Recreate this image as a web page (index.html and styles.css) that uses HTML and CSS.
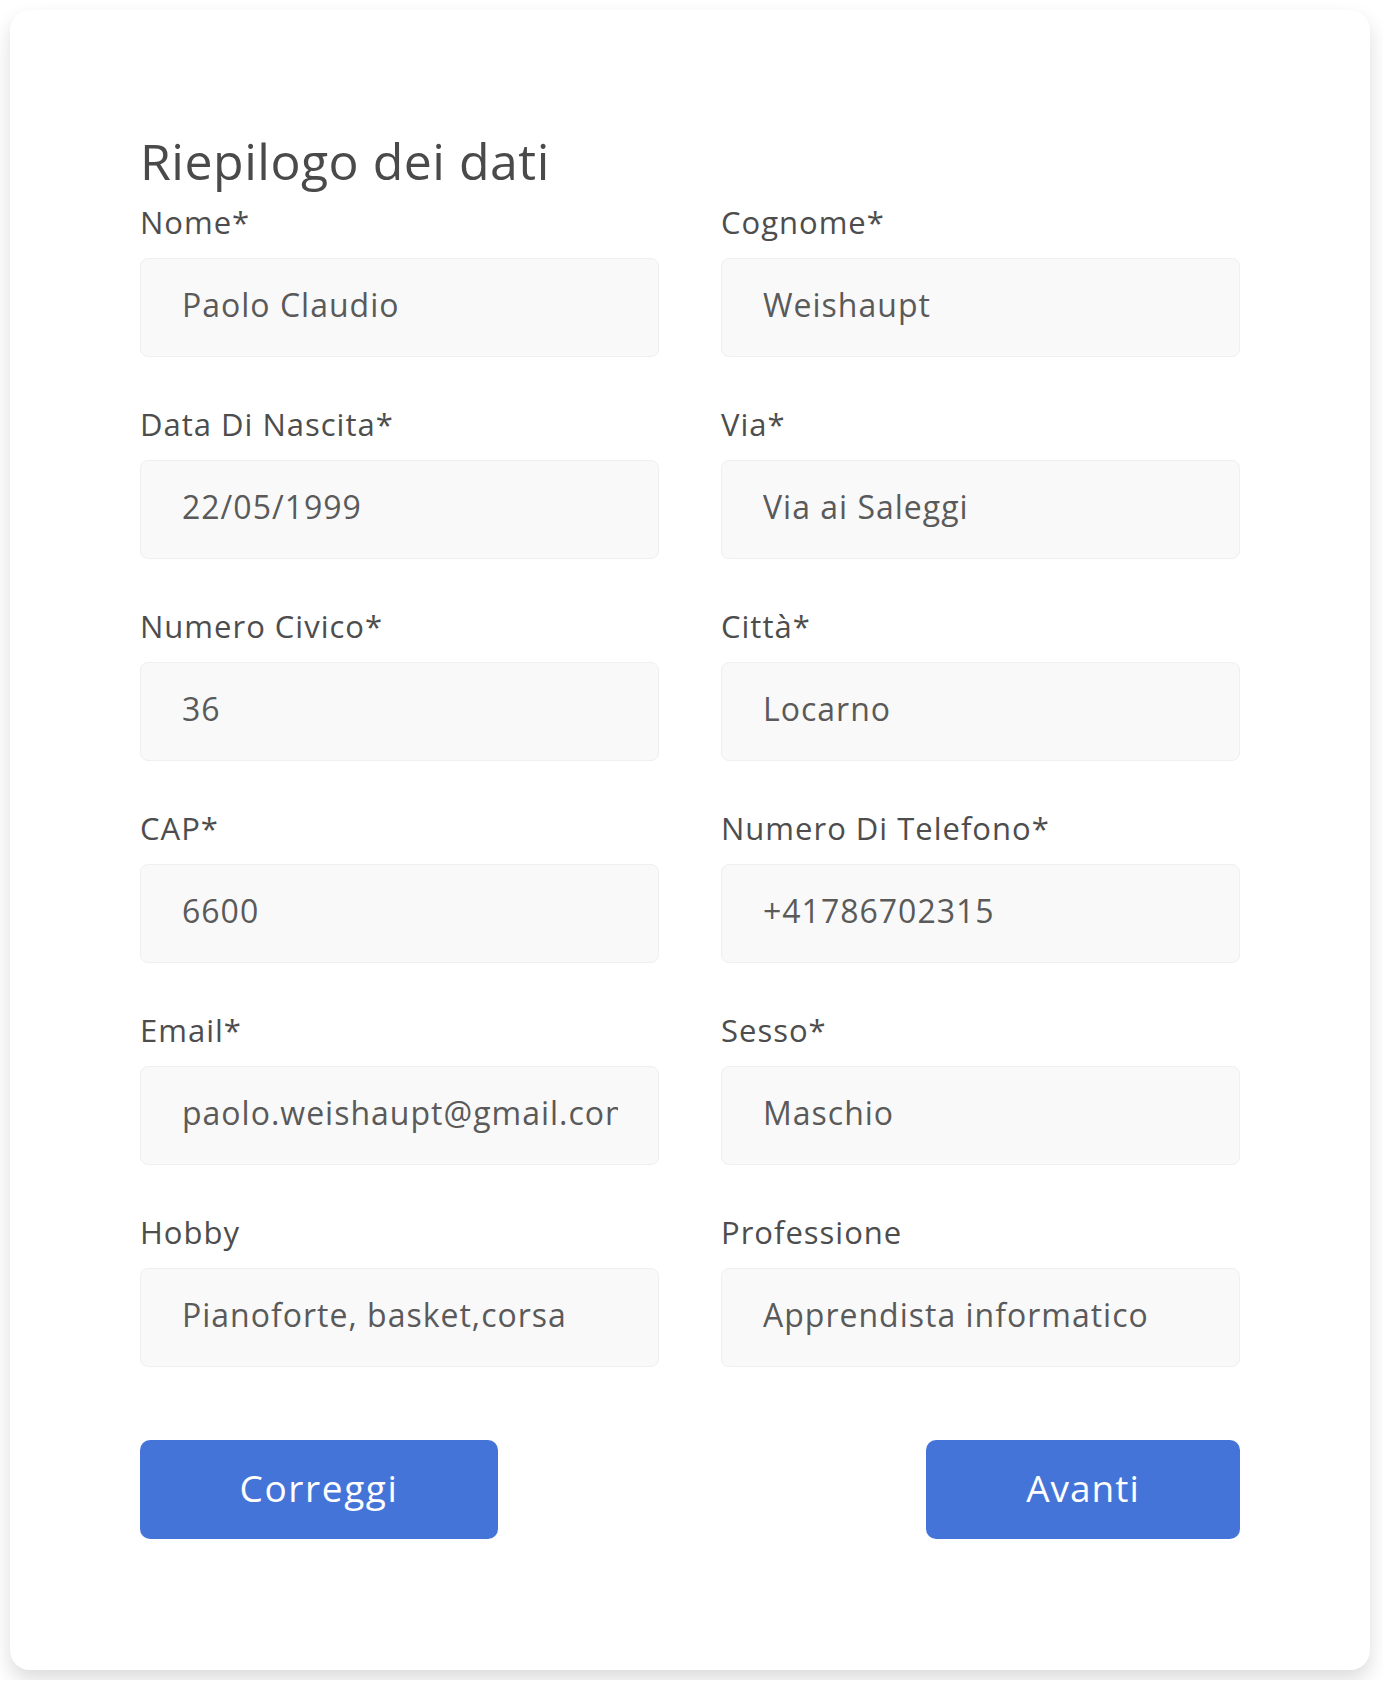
FILE: index.html
```html
<!DOCTYPE html>
<html lang="it">
<head>
<meta charset="utf-8">
<title>Riepilogo dei dati</title>
<link rel="stylesheet" href="styles.css">
</head>
<body>
<main class="card">
  <h1 class="title">Riepilogo dei dati</h1>
  <form class="grid">
    <div class="field"><label class="label">Nome*</label><input class="input" readonly value="Paolo Claudio"></div>
    <div class="field"><label class="label">Cognome*</label><input class="input" readonly value="Weishaupt"></div>
    <div class="field"><label class="label">Data Di Nascita*</label><input class="input" readonly value="22/05/1999"></div>
    <div class="field"><label class="label">Via*</label><input class="input" readonly value="Via ai Saleggi"></div>
    <div class="field"><label class="label">Numero Civico*</label><input class="input" readonly value="36"></div>
    <div class="field"><label class="label">Città*</label><input class="input" readonly value="Locarno"></div>
    <div class="field"><label class="label">CAP*</label><input class="input" readonly value="6600"></div>
    <div class="field"><label class="label">Numero Di Telefono*</label><input class="input" readonly value="+41786702315"></div>
    <div class="field"><label class="label">Email*</label><input class="input" readonly value="paolo.weishaupt@gmail.com"></div>
    <div class="field"><label class="label">Sesso*</label><input class="input" readonly value="Maschio"></div>
    <div class="field"><label class="label">Hobby</label><input class="input" readonly value="Pianoforte, basket,corsa"></div>
    <div class="field"><label class="label">Professione</label><input class="input" readonly value="Apprendista informatico"></div>
  </form>
  <div class="actions">
    <button class="btn btn-back" type="button">Correggi</button>
    <button class="btn btn-next" type="button">Avanti</button>
  </div>
</main>
</body>
</html>
```
FILE: styles.css
```css
html, body {
  margin: 0;
  padding: 0;
  background: #ffffff;
}
body {
  font-family: "Open Sans", "Noto Sans", sans-serif;
  color: #4d4d4d;
  padding: 10px 13px 10px 10px;
}
.card {
  box-sizing: border-box;
  width: 1360px;
  background: #ffffff;
  border-radius: 20px;
  box-shadow: 0 10px 20px rgba(0, 0, 0, 0.14);
  padding: 121px 130px 131px 130px;
}
.title {
  margin: 0 0 13px 0;
  font-size: 50px;
  line-height: 60px;
  font-weight: 400;
  letter-spacing: 0.5px;
  color: #4a4a4a;
}
.grid {
  display: grid;
  grid-template-columns: 519px 519px;
  column-gap: 62px;
  row-gap: 49px;
  margin: 0;
}
.field {
  display: flex;
  flex-direction: column;
}
.label {
  font-size: 31px;
  line-height: 36px;
  letter-spacing: 1px;
  margin-bottom: 18px;
  color: #4d4d4d;
}
.input {
  box-sizing: border-box;
  height: 99px;
  width: 100%;
  margin: 0;
  padding: 0 40px 6px 41px;
  border: 1px solid #efefef;
  border-radius: 8px;
  background: #f9f9f9;
  font-family: inherit;
  font-size: 32px;
  letter-spacing: 1px;
  color: #5a5a5a;
  outline: none;
}
.actions {
  display: flex;
  justify-content: space-between;
  margin-top: 73px;
}
.btn {
  height: 99px;
  border: none;
  border-radius: 10px;
  background: #4574d9;
  color: #ffffff;
  font-family: inherit;
  font-size: 37px;
  padding: 0 0 4px 0;
}
.btn-back {
  width: 358px;
  letter-spacing: 1.6px;
}
.btn-next {
  width: 314px;
  letter-spacing: 1px;
}
```
